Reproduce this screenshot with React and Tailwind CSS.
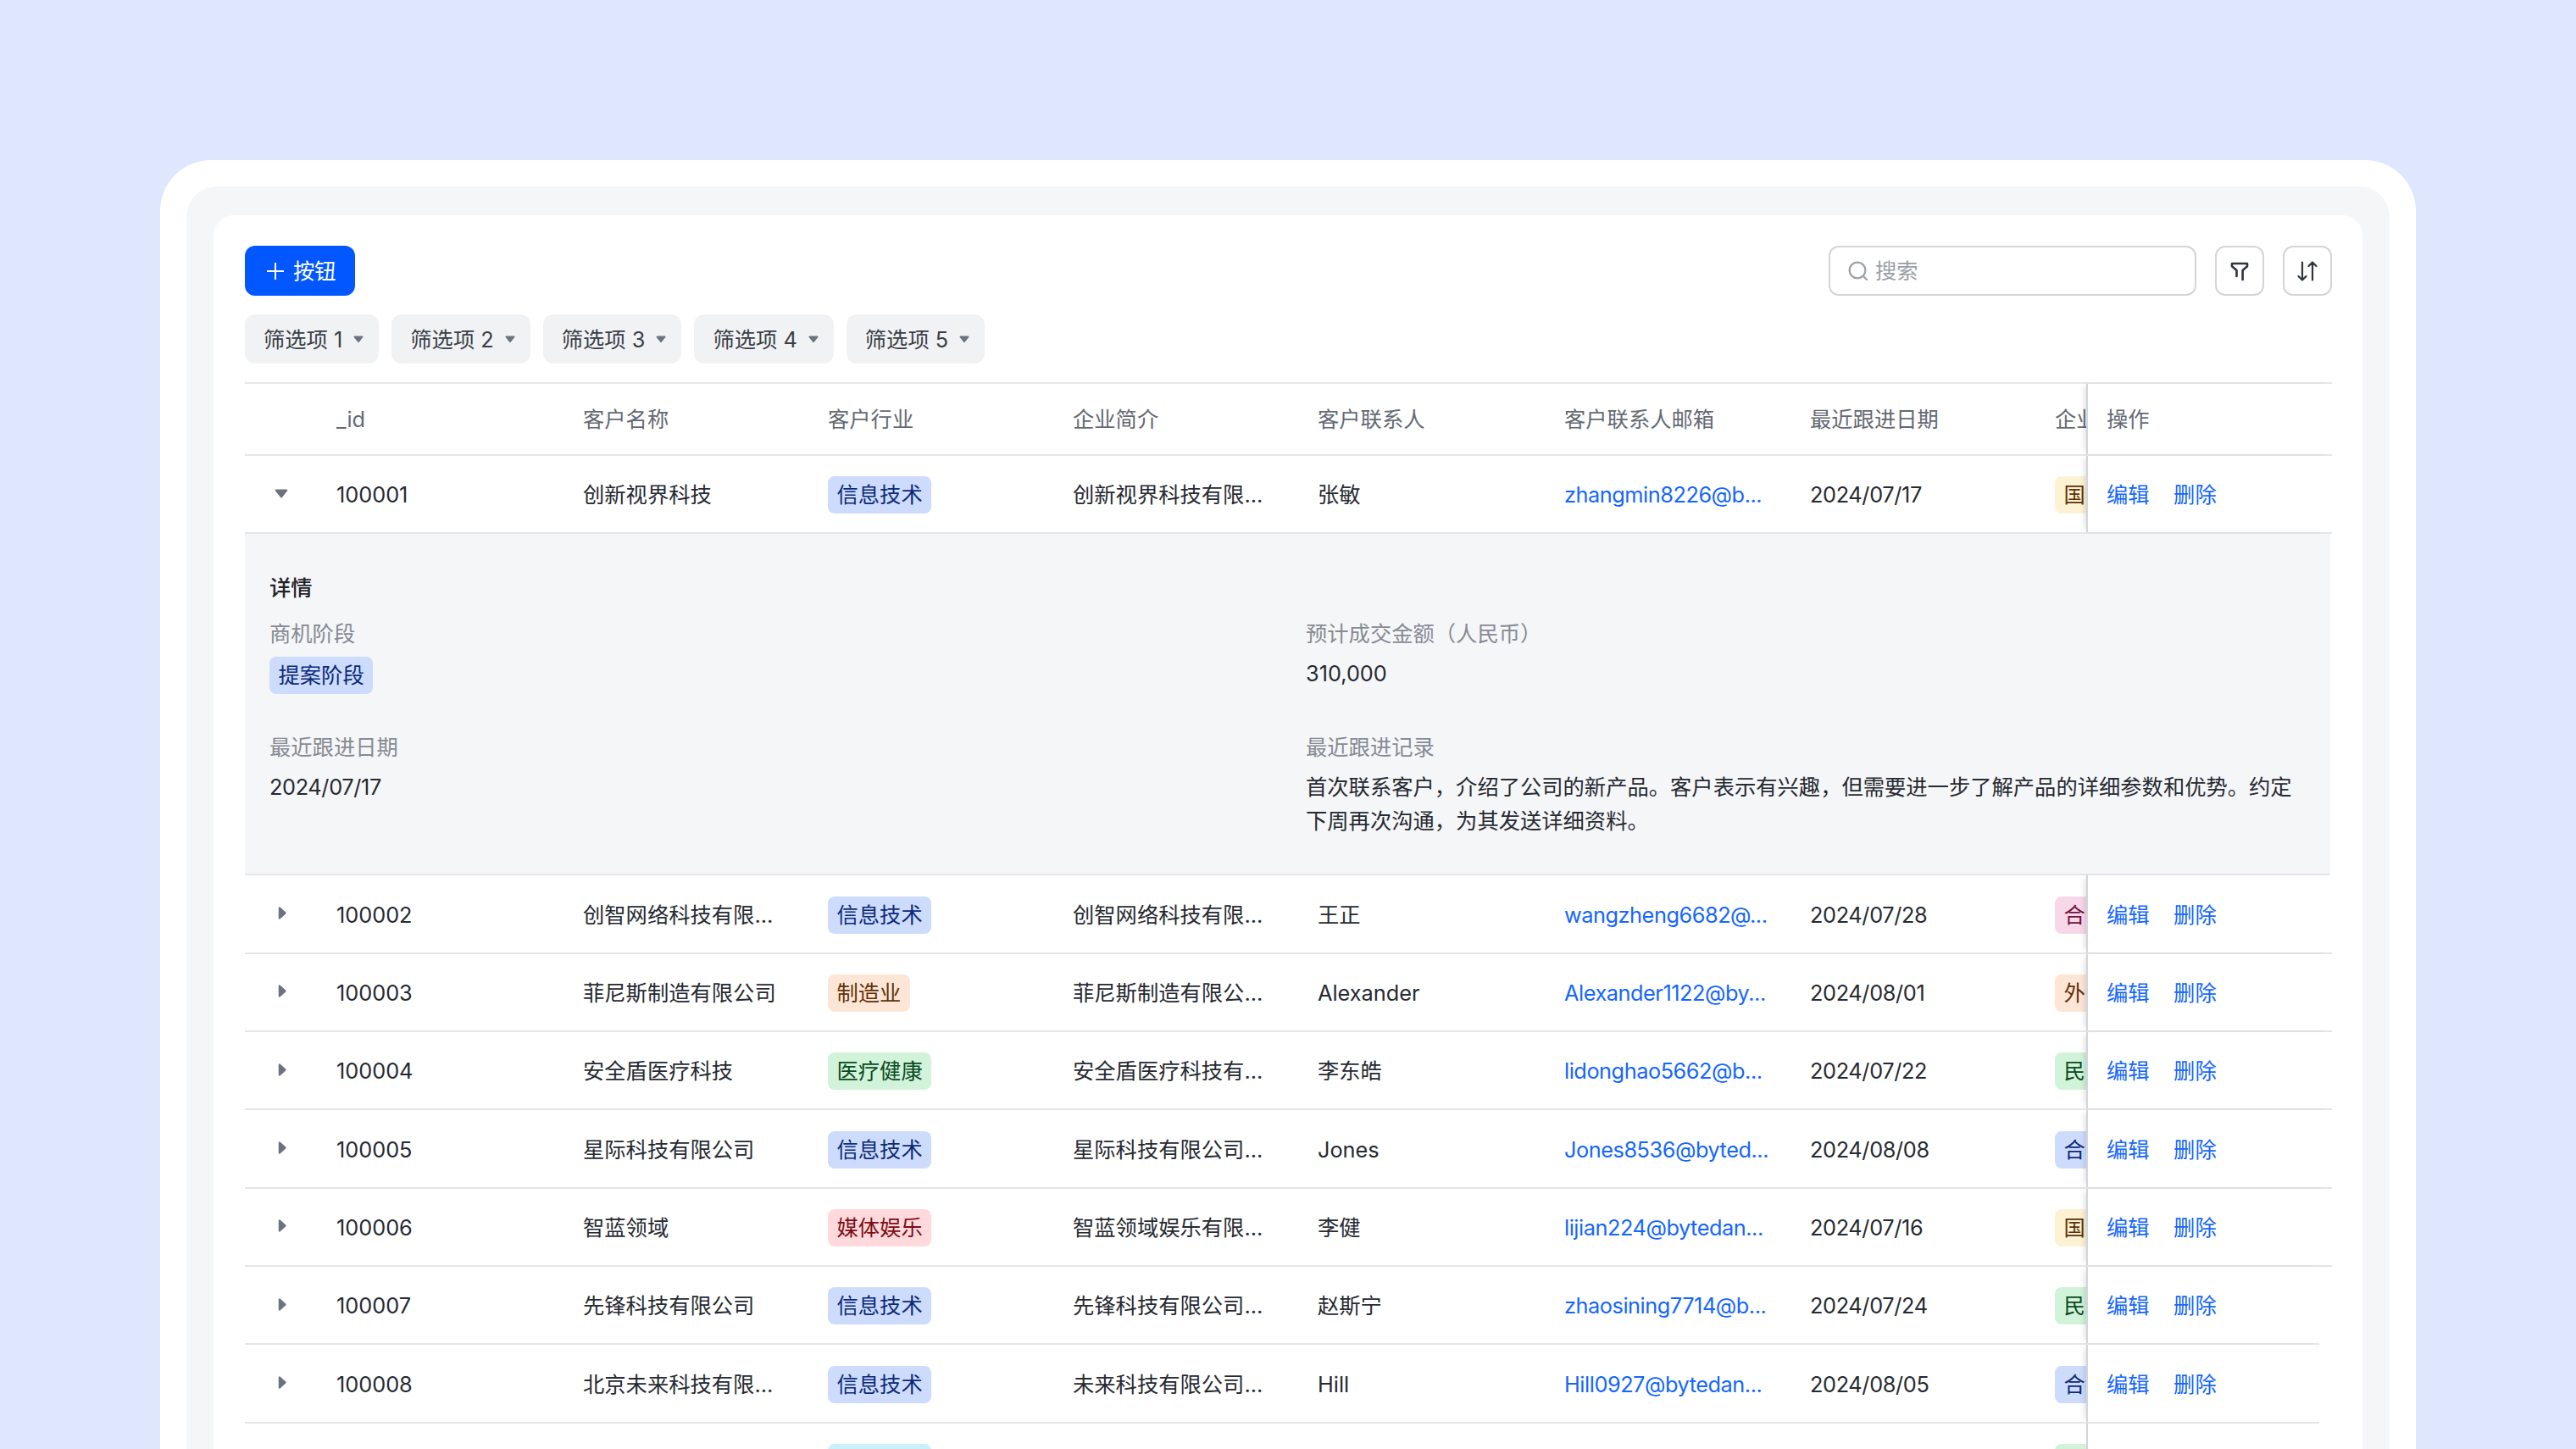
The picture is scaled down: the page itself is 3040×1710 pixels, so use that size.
import React from "react";

const font = { fontFamily: '"Inter", "Noto Sans CJK SC", sans-serif' };

const rows = [
  { id: "100001", name: "创新视界科技", industry: "信息技术", tone: "blue", intro: "创新视界科技有限...", contact: "张敏", email: "zhangmin8226@b...", date: "2024/07/17", kind: "国企", kindTone: "yellow", open: true },
  { id: "100002", name: "创智网络科技有限...", industry: "信息技术", tone: "blue", intro: "创智网络科技有限...", contact: "王正", email: "wangzheng6682@...", date: "2024/07/28", kind: "合资", kindTone: "pink" },
  { id: "100003", name: "菲尼斯制造有限公司", industry: "制造业", tone: "orange", intro: "菲尼斯制造有限公...", contact: "Alexander", email: "Alexander1122@by...", date: "2024/08/01", kind: "外企", kindTone: "orange" },
  { id: "100004", name: "安全盾医疗科技", industry: "医疗健康", tone: "green", intro: "安全盾医疗科技有...", contact: "李东皓", email: "lidonghao5662@b...", date: "2024/07/22", kind: "民企", kindTone: "green" },
  { id: "100005", name: "星际科技有限公司", industry: "信息技术", tone: "blue", intro: "星际科技有限公司...", contact: "Jones", email: "Jones8536@byted...", date: "2024/08/08", kind: "合资", kindTone: "blue" },
  { id: "100006", name: "智蓝领域", industry: "媒体娱乐", tone: "red", intro: "智蓝领域娱乐有限...", contact: "李健", email: "lijian224@bytedan...", date: "2024/07/16", kind: "国企", kindTone: "yellow" },
  { id: "100007", name: "先锋科技有限公司", industry: "信息技术", tone: "blue", intro: "先锋科技有限公司...", contact: "赵斯宁", email: "zhaosining7714@b...", date: "2024/07/24", kind: "民企", kindTone: "green", short: true },
  { id: "100008", name: "北京未来科技有限...", industry: "信息技术", tone: "blue", intro: "未来科技有限公司...", contact: "Hill", email: "Hill0927@bytedan...", date: "2024/08/05", kind: "合资", kindTone: "blue", short: true },
];

const tones = {
  blue: "bg-[#cddcfd] text-[#0c2a78]",
  orange: "bg-[#fde6d6] text-[#5f3208]",
  green: "bg-[#d0f3d9] text-[#0c4a1f]",
  red: "bg-[#ffd9dc] text-[#7d0c14]",
  yellow: "bg-[#fdf2d4] text-[#5b3208]",
  pink: "bg-[#f8d7e8] text-[#73103f]",
};

function Caret({ down, className }) {
  return (
    <svg viewBox="0 0 14 14" className={className} fill="#6b7280">
      {down ? <path d="M1.6 3h10.8a1 1 0 0 1 .8 1.6L7.8 11.4a1 1 0 0 1-1.6 0L.8 4.6A1 1 0 0 1 1.6 3z" /> : <path d="M3.5 1.2a1 1 0 0 1 1.6-.7l6.2 5.6a1.2 1.2 0 0 1 0 1.8l-6.2 5.6a1 1 0 0 1-1.6-.7z" />}
    </svg>
  );
}

function Tag({ tone, children }) {
  return <span className={`inline-flex h-[44px] items-center rounded-[8px] px-[10.5px] whitespace-nowrap ${tones[tone]}`}>{children}</span>;
}

function Row({ row }) {
  return (
    <div className={`flex h-[92.35px] shrink-0 items-stretch border-b-2 border-[#e4e6ea] ${row.short ? "mr-[15px]" : ""}`}>
      <div className="flex min-w-0 w-[2173px] shrink-0 items-center overflow-hidden pt-[2px]">
        <div className="mb-[4px] flex w-[108px] shrink-0 justify-center pr-[22px]">
          <Caret down={row.open} className={row.open ? "h-[16px] w-[16px]" : "h-[15px] w-[15px]"} />
        </div>
        <div className="w-[291px] shrink-0">{row.id}</div>
        <div className="w-[289px] shrink-0">{row.name}</div>
        <div className="w-[289px] shrink-0"><Tag tone={row.tone}>{row.industry}</Tag></div>
        <div className="w-[289px] shrink-0">{row.intro}</div>
        <div className="w-[291px] shrink-0">{row.contact}</div>
        <div className="w-[290px] shrink-0 tracking-[-0.45px] text-[#1466ff]">{row.email}</div>
        <div className="w-[289px] shrink-0 tracking-[-0.35px]">{row.date}</div>
        <div className="w-[120px] shrink-0"><Tag tone={row.kindTone}>{row.kind}</Tag></div>
      </div>
      <ActionCell>
        <a className="pt-[2px] text-[#1466ff]">编辑</a>
        <a className="ml-[28.500px] pt-[2px] text-[#1466ff]">删除</a>
      </ActionCell>
    </div>
  );
}

function ActionCell({ children }) {
  return <div className="relative flex flex-1 items-center border-l-2 border-[#d3d6dc] pl-[22px] shadow-[-5px_0_6px_-3px_rgba(0,0,0,0.12)]">{children}</div>;
}

function Detail() {
  return (
    <div className="mr-[2px] h-[403.5px] shrink-0 border-b-2 border-[#e4e6ea] bg-[#f5f6f8] pl-[29px] pr-[30px] pt-[47px]">
      <div className="font-medium leading-[34px] text-[#1f2329]">详情</div>
      <div className="mt-[20px] grid grid-cols-2 gap-x-[44px] gap-y-[46px]">
        <div>
          <div className="leading-[34px] text-[#868b94]">商机阶段</div>
          <div className="mt-[10px]"><Tag tone="blue">提案阶段</Tag></div>
        </div>
        <div>
          <div className="leading-[34px] text-[#868b94]">预计成交金额（人民币）</div>
          <div className="mt-[10px] leading-[40px]">310,000</div>
        </div>
        <div>
          <div className="leading-[34px] text-[#868b94]">最近跟进日期</div>
          <div className="mt-[10px] leading-[40px] tracking-[-0.35px]">2024/07/17</div>
        </div>
        <div>
          <div className="leading-[34px] text-[#868b94]">最近跟进记录</div>
          <div className="mt-[10px] leading-[40px]">首次联系客户，介绍了公司的新产品。客户表示有兴趣，但需要进一步了解产品的详细参数和优势。约定下周再次沟通，为其发送详细资料。</div>
        </div>
      </div>
    </div>
  );
}

const headers = [
  ["_id", "w-[291px]"],
  ["客户名称", "w-[289px]"],
  ["客户行业", "w-[289px]"],
  ["企业简介", "w-[289px]"],
  ["客户联系人", "w-[291px]"],
  ["客户联系人邮箱", "w-[290px]"],
  ["最近跟进日期", "w-[289px]"],
  ["企业", "w-[120px]"],
];

export default function App() {
  return (
    <div style={font} className="h-[1710px] w-[3040px] overflow-hidden bg-[#dfe7fe] pl-[189px] pr-[189px] pt-[189px] text-[25.3px] text-[#262a31]">
      <div className="h-[1600px] rounded-t-[60px] bg-white px-[31px] pt-[31px]">
        <div className="h-[1600px] rounded-t-[36px] bg-[#f5f6f8] px-[32px] pt-[34px]">
          <div className="flex h-[1600px] flex-col rounded-t-[24px] bg-white px-[36px] pt-[36px]">
            <div className="ml-px flex items-center justify-between">
              <button className="flex h-[59px] w-[130px] items-center rounded-[12px] bg-[#0257ff] pl-[26px] text-white">
                <svg viewBox="0 0 20 20" className="mr-[11px] h-[20px] w-[20px]" fill="none" stroke="currentColor" strokeWidth="2"><path d="M10 0v20M0 10h20" /></svg>
                按钮
              </button>
              <div className="flex items-center gap-[22px]">
                <div className="flex h-[59px] w-[434px] items-center rounded-[12px] border-2 border-[#d2d5da] pl-[21px] text-[#9aa0a8]">
                  <svg viewBox="0 0 24 24" className="mr-[8px] h-[24px] w-[24px]" fill="none" stroke="#9aa0a8" strokeWidth="2.2" strokeLinecap="round"><circle cx="11" cy="11" r="9.4" /><path d="M18 18l4 4" /></svg>
                  搜索
                </div>
                <button className="flex h-[59px] w-[58px] items-center justify-center rounded-[12px] border-2 border-[#d2d5da]">
                  <svg viewBox="0 0 24 24" className="h-[24px] w-[24px]" fill="none" stroke="#30353c" strokeWidth="2.6" strokeLinecap="round" strokeLinejoin="round"><path d="M3 3h18v3.200L15.600 11v11M8.500 11 3 6.200V3M8.500 11v7" /></svg>
                </button>
                <button className="flex h-[59px] w-[58px] items-center justify-center rounded-[12px] border-2 border-[#d2d5da]">
                  <svg viewBox="0 0 24 24" className="h-[24px] w-[24px]" fill="none" stroke="#30353c" strokeWidth="2.2" strokeLinecap="round" strokeLinejoin="round"><path d="M6 1.500v21M1.500 18 6 22.500l4.500-4.500M18 22.500v-21M13.500 6 18 1.500 22.500 6" /></svg>
                </button>
              </div>
            </div>
            <div className="ml-px mt-[22px] flex gap-[15px]">
              {[1, 2, 3, 4, 5].map((n) => (
                <div key={n} className="flex h-[58px] items-center rounded-[12px] bg-[#f1f2f4] pl-[22px] pr-[18px] pt-[2px] text-[#3a3f47]">
                  筛选项 {n}
                  <Caret down className="mb-[2px] ml-[13px] h-[12px] w-[12px]" />
                </div>
              ))}
            </div>
            <div className="ml-px mt-[22px] flex flex-col border-t-2 border-[#e4e6ea]">
              <div className="flex h-[84.5px] shrink-0 items-stretch border-b-2 border-[#e4e6ea] text-[#646a73]">
                <div className="flex w-[2173px] shrink-0 items-center overflow-hidden pl-[108px] pt-[2px]">
                  {headers.map(([label, width]) => (
                    <div key={label} className={`${width} shrink-0 whitespace-nowrap`}>{label}</div>
                  ))}
                </div>
                <ActionCell><span className="pt-[2px]">操作</span></ActionCell>
              </div>
              {rows.map((row) => (
                <React.Fragment key={row.id}>
                  <Row row={row} />
                  {row.open && <Detail />}
                </React.Fragment>
              ))}
              <div className="flex h-[92px] shrink-0 items-center">
                <div className="ml-[688px] h-[44px] w-[122px] rounded-[8px] bg-[#c9f1fb]" />
                <div className="ml-[1326px] h-[44px] w-[37px] rounded-l-[8px] bg-[#d0f3d9]" />
                <div className="h-full border-l-2 border-[#d3d6dc]" />
              </div>
            </div>
          </div>
        </div>
      </div>
    </div>
  );
}
